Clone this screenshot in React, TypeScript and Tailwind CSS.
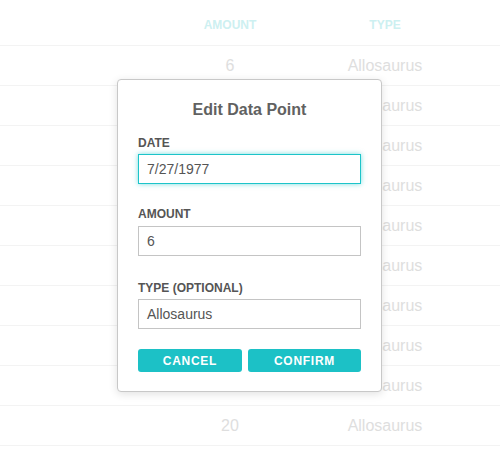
import React from "react";

const rows = ["6", "", "", "", "", "", "", "", "", "20"];

export default function App() {
  return (
    <div className="relative w-[500px] h-[450px] overflow-hidden bg-white" style={{ fontFamily: '"Liberation Sans", Arial, sans-serif' }}>
      <div className="grid grid-cols-[180px_100px_210px] h-[46px] items-center pt-[4px] border-b border-[#f3f3f3]">
        <div />
        <div className="text-center text-[12px] font-bold text-[#cdf0f1]">AMOUNT</div>
        <div className="text-center text-[12px] font-bold text-[#cdf0f1]">TYPE</div>
      </div>
      {rows.map((r, i) => (
        <div key={i} className="grid grid-cols-[180px_100px_210px] h-[40px] items-center border-b border-[#f3f3f3]">
          <div />
          <div className="text-center text-[16px] text-[#dedede]">{r}</div>
          <div className="text-center text-[16px] text-[#dedede]">Allosaurus</div>
        </div>
      ))}

      <div className="absolute left-[117px] top-[79px] w-[265px] h-[313px] bg-white border border-[#c8c8c8] rounded-[4px] shadow-[0_2px_8px_rgba(0,0,0,0.12)] px-[20px]">
        <div className="pt-[20px] h-[40px] leading-[20px] text-center text-[16px] font-bold text-[#616161]">Edit Data Point</div>
        <div className="mt-[15px] h-[16px] leading-[16px] text-[12px] font-bold text-[#555]">DATE</div>
        <div className="mt-[3px] h-[30px] border border-[#1cc4c9] shadow-[0_0_5px_rgba(28,196,201,0.6)] flex items-center px-[8px] text-[14px] text-[#555]">7/27/1977</div>
        <div className="mt-[22px] h-[16px] leading-[16px] text-[12px] font-bold text-[#555]">AMOUNT</div>
        <div className="mt-[4px] h-[30px] border border-[#c4c4c4] flex items-center px-[8px] text-[14px] text-[#555]">6</div>
        <div className="mt-[24px] h-[16px] leading-[16px] text-[12px] font-bold text-[#555]">TYPE (OPTIONAL)</div>
        <div className="mt-[3px] h-[30px] border border-[#c4c4c4] flex items-center px-[8px] text-[14px] text-[#555]">Allosaurus</div>
        <div className="mt-[20px] flex gap-[6px]">
          <div className="w-[104px] h-[23px] rounded-[3px] bg-[#1cc1c6] flex items-center justify-center text-white text-[12px] font-bold tracking-[0.06em]">CANCEL</div>
          <div className="flex-1 h-[23px] rounded-[3px] bg-[#1cc1c6] flex items-center justify-center text-white text-[12px] font-bold tracking-[0.06em]">CONFIRM</div>
        </div>
      </div>
    </div>
  );
}
